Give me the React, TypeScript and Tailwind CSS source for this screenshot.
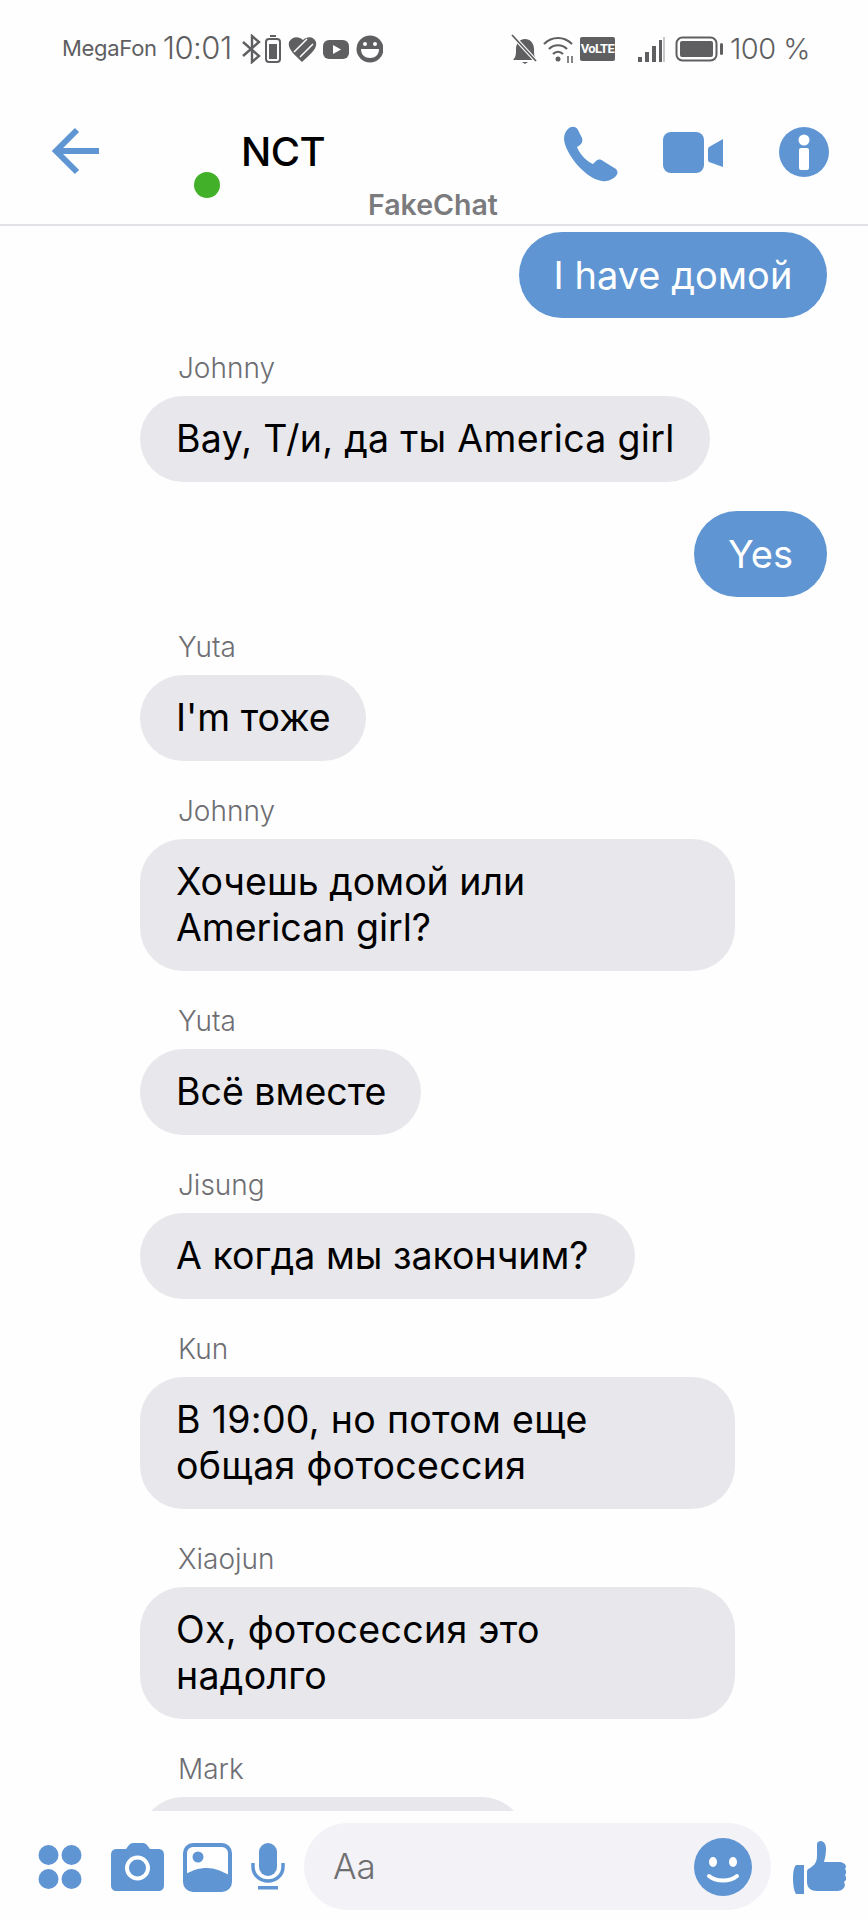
import React from 'react';

const BLUE = '#5e95d2';
const GREY = '#5f5f62';

type Msg = { from?: string; lines: string[]; width: string; wide?: boolean };

const messages: Msg[] = [
  { lines: ['I have домой'], width: 'w-[308px]' },
  { from: 'Johnny', lines: ['Вау, Т/и, да ты America girl'], width: 'w-[570px]', wide: true },
  { lines: ['Yes'], width: 'w-[133px]' },
  { from: 'Yuta', lines: ["I'm тоже"], width: 'w-[226px]' },
  { from: 'Johnny', lines: ['Хочешь домой или', 'American girl?'], width: 'w-[595px]' },
  { from: 'Yuta', lines: ['Всё вместе'], width: 'w-[281px]' },
  { from: 'Jisung', lines: ['А когда мы закончим?'], width: 'w-[495px]' },
  { from: 'Kun', lines: ['В 19:00, но потом еще', 'общая фотосессия'], width: 'w-[595px]', wide: true },
  { from: 'Xiaojun', lines: ['Ох, фотосессия это', 'надолго'], width: 'w-[595px]', wide: true },
  { from: 'Mark', lines: [], width: 'w-[385px]' },
];

function StatusBar() {
  return (
    <div className="flex h-[97px] items-center pl-[62px] pr-[58px] text-[#5f5f62]">
      <span className="text-[22px] tracking-[-0.3px]">MegaFon</span>
      <span className="ml-[6px] text-[31px] font-light tracking-[-0.5px]">10:01</span>
      <svg className="ml-[9px]" width="142" height="30" viewBox="0 0 142 30">
        {/* bluetooth */}
        <path d="M2 8l16 14-7 6V2l7 6L2 22" fill="none" stroke={GREY} strokeWidth="2.4" />
        <rect x="25" y="5" width="14" height="23" rx="3" fill="none" stroke={GREY} strokeWidth="2" />
        <rect x="29" y="1" width="6" height="2" fill={GREY} />
        <rect x="28" y="10" width="8" height="15" fill={GREY} />
        {/* heart */}
        <g transform="translate(-7 0)">
          <path d="M55 8c3-6 10-6 14-2 4-4 11-4 13 2 2 7-7 13-14 20-6-6-15-13-13-20z" fill={GREY} />
          <path d="M60 18L73 5M66 23L79 10" stroke="#fff" strokeWidth="1.5" />
        </g>
        {/* video app */}
        <rect x="82" y="6" width="26" height="19" rx="6" fill={GREY} />
        <path d="M92 11l8 4.500-8 4.500z" fill="#fff" />
        {/* face */}
        <circle cx="129" cy="15" r="13.500" fill={GREY} />
        <path d="M120 15h18c0 6-4 9-9 9s-9-3-9-9z" fill="#fff" />
        <circle cx="124" cy="10" r="2" fill="#fff" />
        <circle cx="134" cy="10" r="2" fill="#fff" />
      </svg>
      <svg className="ml-auto" width="62" height="30" viewBox="0 0 62 30">
        {/* muted bell */}
        <path d="M2 26c3-3 3-6 3-11 0-6 4-10 9-10s9 4 9 10c0 5 0 8 3 11z" fill={GREY} />
        <path d="M11 28h6l-3 2z" fill={GREY} />
        <path d="M1 1l24 26" stroke="#fff" strokeWidth="4" />
        <path d="M1 1l24 26" stroke={GREY} strokeWidth="1.800" />
        {/* wifi */}
        <path d="M33 10c8-8 20-8 28 0M38 15c5-5 13-5 18 0M42 20c3-3 7-3 10 0" fill="none" stroke={GREY} strokeWidth="2.200" />
        <circle cx="47" cy="25" r="2.500" fill={GREY} />
        <path d="M57 22v7M61 22v7" stroke={GREY} strokeWidth="1.500" />
      </svg>
      <div className="ml-[7px] flex h-[24px] w-[35px] items-center justify-center rounded-[2px] bg-[#5f5f62] font-['Roboto',sans-serif] text-[13px] font-bold tracking-[-0.6px] text-white">
        VoLTE
      </div>
      <svg className="ml-[23px]" width="28" height="28" viewBox="0 0 28 28">
        <rect x="0" y="22" width="4" height="5" fill={GREY} />
        <rect x="7" y="17" width="4" height="10" fill={GREY} />
        <rect x="14" y="11" width="4" height="16" fill={GREY} />
        <rect x="21" y="5" width="3" height="22" fill={GREY} />
        <rect x="25" y="2" width="2" height="25" fill="#c9c9cc" />
      </svg>
      <svg className="ml-[9px]" width="49" height="26" viewBox="0 0 49 26">
        <rect x="1.500" y="1.500" width="40" height="23" rx="6" fill="none" stroke={GREY} strokeWidth="2" />
        <rect x="5" y="5" width="33" height="16" rx="2" fill={GREY} />
        <rect x="45" y="7" width="3" height="12" rx="1.500" fill={GREY} />
      </svg>
      <span className="ml-[6px] text-[29px] font-light tracking-[-0.5px]">100 %</span>
    </div>
  );
}

function Header() {
  return (
    <div className="relative flex h-[129px] items-start border-b-2 border-[#e2e2e6] pl-[52px] pr-[39px]">
      <svg className="mt-[30px]" width="48" height="48" viewBox="0 0 48 48">
        <path d="M47 24H5M25 3L4 24l21 21" fill="none" stroke={BLUE} strokeWidth="6" />
      </svg>
      <div className="ml-[94px] mt-[75px] h-[26px] w-[26px] rounded-full bg-[#43b02a]" />
      <span className="ml-[21px] mt-[30px] text-[40px] font-medium leading-[50px] tracking-[-0.5px] text-black">NCT</span>
      <svg className="ml-auto mt-[29px]" width="54" height="56" viewBox="0 0 54 56">
        <path d="M4 3c3-3 8-3 10 1l4 8c1 3 0 5-2 7l-3 2c2 6 9 14 16 17l3-3c2-2 5-2 7 0l13 8c2 2 2 5 0 7-3 3-8 6-14 5C22 53 1 28 0 13c0-4 1-7 4-10z" fill={BLUE} />
      </svg>
      <svg className="ml-[45px] mt-[35px]" width="61" height="41" viewBox="0 0 61 41">
        <rect x="0" y="0" width="41" height="41" rx="8" fill={BLUE} />
        <path d="M46 15l14-8v28l-14-5c-1-1-1-2-1-3V18c0-1 0-2 1-3z" fill={BLUE} />
      </svg>
      <svg className="ml-[55px] mt-[30px]" width="50" height="50" viewBox="0 0 50 50">
        <circle cx="25" cy="25" r="25" fill={BLUE} />
        <circle cx="25" cy="13" r="5.500" fill="#fff" />
        <rect x="20" y="21" width="10" height="22" rx="2" fill="#fff" />
      </svg>
      <span className="absolute left-[368px] top-[90px] text-[28.5px] font-semibold leading-[36px] text-[#7b7b7e]">FakeChat</span>
    </div>
  );
}

function Bubble({ msg }: { msg: Msg }) {
  if (!msg.from) {
    return (
      <div className={`${msg.width} ml-auto mr-[41px] flex h-[86px] shrink-0 items-center justify-center whitespace-nowrap rounded-[43px] bg-[#5e95d2] text-[38px] font-normal leading-[46px] text-white`}>
        {msg.lines[0]}
      </div>
    );
  }
  return (
    <div className="ml-[140px] flex shrink-0 flex-col">
      <div className="ml-[38px] h-[42px] text-[28px] font-light leading-[42px] text-[#6e6e73]">{msg.from}</div>
      <div className={`${msg.width} ${msg.wide ? 'tracking-[0.3px]' : ''} mt-[7px] min-h-[86px] whitespace-nowrap rounded-[43px] bg-[#e8e7eb] py-[20px] pl-[36px] text-[37.5px] font-normal leading-[46px] text-black`}>
        {msg.lines.map((l) => (
          <div key={l}>{l}</div>
        ))}
      </div>
    </div>
  );
}

function BottomBar() {
  return (
    <div className="flex h-[109px] items-start pl-[38px] pt-[12px]">
      <svg className="mt-[22px]" width="44" height="44" viewBox="0 0 44 44" fill={BLUE}>
        <circle cx="10.500" cy="10" r="10" />
        <circle cx="33.500" cy="10" r="10" />
        <circle cx="10.500" cy="34" r="10" />
        <circle cx="33.500" cy="34" r="10" />
      </svg>
      <svg className="ml-[29px] mt-[20px]" width="53" height="48" viewBox="0 0 53 48">
        <path d="M6 6h9l3-4c1-1 2-2 4-2h10c2 0 3 1 4 2l3 4h8c4 0 6 2 6 6v30c0 4-2 6-6 6H6c-4 0-6-2-6-6V12c0-4 2-6 6-6z" fill={BLUE} />
        <circle cx="26.500" cy="25" r="10.500" fill="none" stroke="#fff" strokeWidth="4" />
      </svg>
      <svg className="ml-[19px] mt-[20px]" width="49" height="49" viewBox="0 0 49 49">
        <rect x="2" y="2" width="45" height="45" rx="8" fill="#fff" stroke={BLUE} strokeWidth="4" />
        <circle cx="15" cy="14" r="5.500" fill={BLUE} />
        <path d="M3 31c7-4 13-6 21-6s14 3 22 7v12l-3 3H6l-3-3z" fill={BLUE} />
      </svg>
      <svg className="ml-[19px] mt-[20px]" width="34" height="47" viewBox="0 0 34 47">
        <rect x="8" y="0" width="18" height="33" rx="9" fill={BLUE} />
        <path d="M2 20v4c0 8 7 14 15 14s15-6 15-14v-4" fill="none" stroke={BLUE} strokeWidth="3.500" />
        <rect x="7" y="43" width="20" height="3.500" fill={BLUE} />
      </svg>
      <div className="ml-[19px] flex h-[87px] w-[467px] items-center justify-between rounded-[44px] bg-[#f2f2f7] pl-[29px] pr-[19px]">
        <span className="text-[35px] font-light text-[#6f6f72]">Aa</span>
        <svg width="58" height="58" viewBox="0 0 58 58">
          <circle cx="29" cy="29" r="29" fill={BLUE} />
          <ellipse cx="19" cy="24" rx="4" ry="5" fill="#fff" />
          <ellipse cx="39" cy="24" rx="4" ry="5" fill="#fff" />
          <path d="M15 38c7 6 21 6 28 0" fill="none" stroke="#fff" strokeWidth="4" strokeLinecap="round" />
        </svg>
      </div>
      <svg className="ml-[22px] mt-[18px]" width="53" height="54" viewBox="0 0 53 54" fill={BLUE}>
        <path d="M0 37c0-6 1-11 3-13h8v29H3C1 50 0 44 0 37z" />
        <path d="M15 28c5-2 9-6 9-13V3c0-2 2-3 4-3 4 1 5 4 5 8 0 5-1 9-2 13h14c5 0 8 2 8 5l-1 2 2 3-2 3 2 4-3 3 1 3c-1 5-5 6-9 6H24c-6 0-10-3-10-9V30z" />
      </svg>
    </div>
  );
}

export default function App() {
  return (
    <div className="flex h-[1920px] w-[868px] flex-col bg-[#fefefe] font-['Inter',sans-serif]">
      <StatusBar />
      <Header />
      <div className="flex h-[1585px] flex-col gap-[29px] overflow-hidden pt-[6px]">
        {messages.map((m, i) => (
          <Bubble key={i} msg={m} />
        ))}
      </div>
      <BottomBar />
    </div>
  );
}
